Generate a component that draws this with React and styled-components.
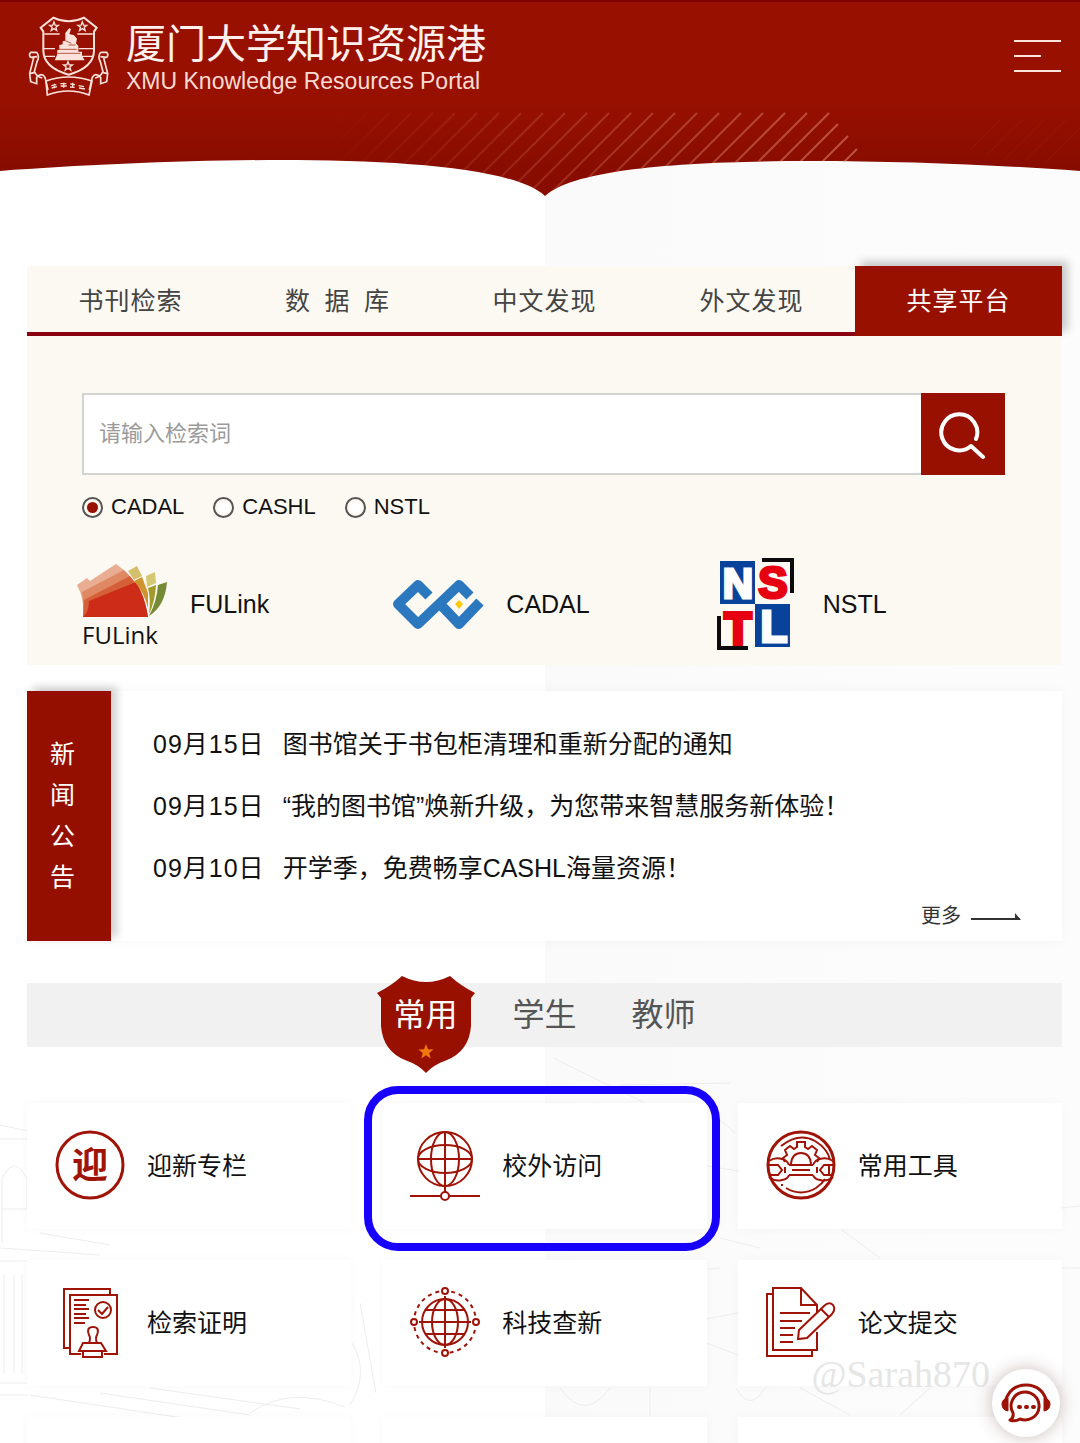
import React, { useState } from "react";
import styled, { createGlobalStyle } from "styled-components";

const tabs = ["书刊检索", "数\u2002据\u2002库", "中文发现", "外文发现", "共享平台"];
const sources = ["CADAL", "CASHL", "NSTL"];
const news = [
  { date: "09月15日", title: "图书馆关于书包柜清理和重新分配的通知" },
  { date: "09月15日", title: "“我的图书馆”焕新升级，为您带来智慧服务新体验！" },
  { date: "09月10日", title: "开学季，免费畅享CASHL海量资源！" },
];
const groups = ["常用", "学生", "教师"];

const starPoints = (cx, cy, r) => {
  const points = [];
  for (let i = 0; i < 10; i++) {
    const a = (Math.PI / 5) * i - Math.PI / 2;
    const len = i % 2 === 0 ? r : r * 0.42;
    points.push(`${cx + len * Math.cos(a)},${cy + len * Math.sin(a)}`);
  }
  return points.join(" ");
};

/* 页头 */
const curve =
  "M0 0H1080V171C1000 165 900 161 810 161C690 161 575 168 545 196C515 168 400 160 280 160C190 160 80 165 0 171Z";
const stripes = Array.from({ length: 25 }, (_, i) => 829 - i * 22);

const HeaderArt = () => (
  <ArtSvg viewBox="0 0 1080 196" preserveAspectRatio="none" aria-hidden="true">
    <defs>
      <linearGradient id="red" x1="0" y1="0" x2="0" y2="1">
        <stop offset="0.5" stopColor="#981000" />
        <stop offset="0.85" stopColor="#880d00" />
      </linearGradient>
      <linearGradient id="fade" gradientUnits="userSpaceOnUse" x1="330" y1="0" x2="850" y2="0">
        <stop offset="0" stopColor="#d0705c" stopOpacity="0" />
        <stop offset="1" stopColor="#d0705c" stopOpacity="0.7" />
      </linearGradient>
      <clipPath id="curveClip">
        <path d={curve} />
      </clipPath>
    </defs>
    <path d={curve} fill="url(#red)" />
    <rect width="1080" height="2" fill="#800000" />
    <g clipPath="url(#curveClip)" stroke="url(#fade)" strokeWidth="2">
      {stripes.map((x) => (
        <path key={x} d={`M${x} 113l-90 90`} />
      ))}
      <path d="M838 124l-70 70M848 136l-60 60M857 149l-50 50" />
    </g>
    <g stroke="#a8301f" strokeOpacity="0.25">
      <path d="M1000 120l-30 30M1022 120l-36 36M1044 120l-40 40M1066 120l-40 40M1080 128l-34 34" />
    </g>
  </ArtSvg>
);

const Emblem = () => (
  <svg width="82" height="80" viewBox="24 33 246 240" fill="none" stroke="#fbe3dc" strokeWidth="6" aria-hidden="true">
    <path d="M62 68L100 38Q146 60 192 38L230 68L222 80V136Q222 188 146 209Q70 188 70 136V80Z" />
    <path strokeWidth="4" d="M73 87h46M172 87h46M71 131h34M176 131h45M73 154h32M180 154h40" />
    <g strokeWidth="4">
      <polygon points={starPoints(102, 65, 14)} />
      <polygon points={starPoints(187, 65, 14)} />
      <polygon points={starPoints(144, 184, 14)} />
    </g>
    <path
      fill="#fbe3dc"
      stroke="none"
      d="M136 84l12-15 5 4-5 14 14 4 9 10-3 14 7 8v17h11v12l8 14h-90l7-16 1-14 6-3v-13l10-2v-9l8-2z"
    />
    <path stroke="#981000" strokeWidth="2" d="M112 133h58M111 145h70M145 120h22M136 107l18 8" />
    <path
      strokeWidth="5"
      d="M50 142H32q-7 7 0 15l9 2-12 47 3 24 18 6v-19q16-16 25 0l9 38M50 142q10 12 1 28l-8 30q9 17 24 19M32 157l19-2M29 206l17-4"
    />
    <path
      strokeWidth="5"
      d="M242 142h18q7 7 0 15l-9 2 12 47-3 24-18 6v-19q-16-16-25 0l-9 38M242 142q-10 12-1 28l8 30q-9 17-24 19M260 157l-19-2M263 206l-17-4"
    />
    <path strokeWidth="5" d="M78 228Q145 204 216 228L207 270Q146 246 82 270Z" />
    <path strokeWidth="4" d="M94 242l15-3M95 249l16-4M103 236v14M121 236h18M122 243h18M131 233v15M151 237l14 2M150 246l14 1M158 233v14M176 242l16 3M177 249l18 3" />
  </svg>
);

/* 共享平台 logo */
const FulinkLogo = () => (
  <LogoSvg width="100" height="92" viewBox="0 0 100 92" aria-hidden="true">
    <path fill="#e9ad92" d="M5 27L15 20L18 23L44 6Q70 24 76 59H11Q13 42 5 27Z" />
    <path fill="#de8963" d="M10 34L52 12Q71 30 76 59H11Q12 45 10 34Z" />
    <path fill="#d55f39" d="M12 42L58 18Q72 34 76 59H11Z" />
    <path fill="#cc2c18" d="M17 43L64 24Q73 38 76 59H11Q17 54 17 43Z" />
    <path fill="#d4c06c" d="M56 13L65 8L70 18L62 22Z" />
    <path fill="#cf9330" d="M62 23L70 19L76 35V50Q72 34 62 23Z" />
    <path fill="#d4c870" d="M74 18L83 14L84 25L75 29Z" />
    <path fill="#a39a2c" d="M76 30L84 27Q83 44 77 56Q79 41 76 30Z" />
    <path fill="#758a34" d="M86 27L95 24Q93 48 77 58Q85 43 86 27Z" />
    <text x="10" y="86" fontFamily='"Open Sans", sans-serif' fontSize="24" fill="#111">
      FULink
    </text>
  </LogoSvg>
);

const CadalLogo = () => (
  <LogoSvg width="100" height="92" viewBox="0 0 100 92" aria-hidden="true">
    <g fill="none" stroke="#2b78bf" strokeWidth="10" strokeLinejoin="round">
      <path d="M41 38L30 27L10 46L30 66L71 27L82 38" />
      <path d="M52 46L71 66L92 44" />
    </g>
    <path fill="#fdc90c" d="M71 42l4 4-4 5-4-5z" />
  </LogoSvg>
);

const NstlLogo = () => (
  <LogoSvg
    width="100"
    height="92"
    viewBox="0 0 100 92"
    fontFamily='"Liberation Sans", sans-serif'
    fontWeight="700"
    fontSize="44"
    strokeWidth="3"
    textAnchor="middle"
    aria-hidden="true"
  >
    <rect x="15" y="3" width="35" height="43" fill="#08429a" />
    <rect x="50" y="46" width="35" height="43" fill="#08429a" />
    <path d="M57 2H87V35M14 58V90H43" fill="none" stroke="#0b0b0b" strokeWidth="4" />
    <text x="33" y="40" fontSize="42" fill="#fff" stroke="#fff">N</text>
    <text x="68" y="40" fill="#e60012" stroke="#e60012">S</text>
    <text x="33" y="86" fill="#e60012" stroke="#e60012" strokeWidth="4">T</text>
    <text x="69" y="84" fill="#fff" stroke="#fff">L</text>
  </LogoSvg>
);

/* 服务图标 */
const Icon = ({ children }) => (
  <LogoSvg width="70" height="70" viewBox="0 0 70 70" fill="none" stroke="#a01408" strokeWidth="2" aria-hidden="true">
    {children}
  </LogoSvg>
);

const WelcomeIcon = () => (
  <Icon>
    <circle cx="35" cy="34" r="33" strokeWidth="3" />
    <text x="35" y="47" textAnchor="middle" fontSize="36" fontWeight="700" fill="#a01408" stroke="none">
      迎
    </text>
  </Icon>
);

const RemoteIcon = () => (
  <Icon>
    <circle cx="35" cy="28" r="27" />
    <ellipse cx="35" cy="28" rx="14" ry="27" />
    <ellipse cx="35" cy="28" rx="27" ry="14" />
    <path d="M8 28H62M35 1V61M0 65H31M39 65H70" />
    <circle cx="35" cy="65" r="4" />
  </Icon>
);

const ToolsIcon = () => (
  <Icon>
    <circle cx="35" cy="34" r="33" strokeWidth="3" />
    <path d="M15 15Q33 1 49 10Q62 18 64 29M20 57Q35 66 50 57Q56 53 59 48" />
    <path d="M19 31L17 27L21 24L19 19L24 15L28 18L31 16V11H39V16L42 18L46 15L51 19L49 24L53 27L51 31" />
    <path d="M25 33Q26 22 35 22Q44 22 45 33" />
    <path d="M23 34H47M23 44H47M26 39H44" />
    <path d="M3 30Q9 26 16 28Q21 29 23 34M3 46Q9 51 16 49Q22 48 23 44M3 34H12L16 39L12 44H3M19 36V42" />
    <path d="M67 30Q61 26 54 28Q49 29 47 34M67 46Q61 51 54 49Q48 48 47 44M67 34H58L54 39L58 44H67M51 36V42M63 34V44" />
    <path d="M15 54h2" />
  </Icon>
);

const CertIcon = () => (
  <Icon>
    <path d="M15 60H9V1H55V7" />
    <path d="M26 66H15V7H62V66H49" />
    <path d="M19 12H34M19 17H31M19 21H34M19 26H31M19 30H34M19 35H30" />
    <circle cx="48" cy="22" r="8" />
    <path d="M43 22L47 26L53 19" />
    <path d="M34 55Q36 50 34 47Q31 39 38 39Q45 39 42 47Q40 50 42 55M30 55H46L51 63H24L28 55ZM28 63H47V69H28Z" />
  </Icon>
);

const NoveltyIcon = () => (
  <Icon>
    <circle cx="35" cy="34" r="31" strokeDasharray="4 4" />
    <circle cx="35" cy="34" r="23" />
    <ellipse cx="35" cy="34" rx="13" ry="23" />
    <path d="M35 8V60M9 34H61M16 22H54M16 46H54" />
    <g fill="#fff">
      <circle cx="35" cy="3" r="3" />
      <circle cx="35" cy="65" r="3" />
      <circle cx="4" cy="34" r="3" />
      <circle cx="66" cy="34" r="3" />
    </g>
  </Icon>
);

const PaperIcon = () => (
  <Icon>
    <path d="M7 6H1V68H46V62" />
    <path d="M51 44V62H7V0H35L51 17V25M35 0V17H51" />
    <path d="M14 25H44M14 33H36M14 40H29M14 47H27M14 54H27" />
    <path d="M32 51L33 42L58 18Q63 13 67 17Q70 21 66 26L41 50ZM55 21L63 29" />
  </Icon>
);

const services = [
  { name: "迎新专栏", icon: WelcomeIcon },
  { name: "校外访问", icon: RemoteIcon, marked: true },
  { name: "常用工具", icon: ToolsIcon },
  { name: "检索证明", icon: CertIcon },
  { name: "科技查新", icon: NoveltyIcon },
  { name: "论文提交", icon: PaperIcon },
];

const CampusSketch = () => (
  <SketchSvg viewBox="0 0 1080 400" preserveAspectRatio="none" fill="none" stroke="#ededed" aria-hidden="true">
    <path d="M0 82L28 88M0 96H28M2 200V136Q14 110 27 136V166H2M0 218H28M4 232V330M14 232V330M22 232V330M0 340H28M0 352H28M0 205L100 212M40 190L110 202" />
    <path d="M30 352L190 376M100 350L250 372M150 345L300 366M250 370Q290 342 345 364M352 300Q370 330 350 362M360 260L376 350" />
    <path d="M553 15L645 60M620 42L730 40M700 60L735 90M690 120L738 128M660 230L720 225M720 195L760 205" />
    <path d="M842 187L880 215M706 276L738 270M706 300L738 312M560 345Q585 380 610 345M650 345V376M800 345L850 372M900 372L930 345M1062 165L1080 163M1062 225H1080M736 345Q750 370 765 345" />
  </SketchSvg>
);

const App = () => {
  const [tab, setTab] = useState(4);
  const [source, setSource] = useState("CADAL");
  const [group, setGroup] = useState(0);

  return (
    <Page>
      <GlobalStyle />
      <CampusSketch />
      <Header>
        <HeaderArt />
        <HeaderBar>
          <Brand href="#">
            <Emblem />
            <BrandText>
              <BrandName>厦门大学知识资源港</BrandName>
              <BrandSub>XMU Knowledge Resources Portal</BrandSub>
            </BrandText>
          </Brand>
          <MenuButton aria-label="菜单">
            <MenuLine />
            <MenuLine $short />
            <MenuLine />
          </MenuButton>
        </HeaderBar>
      </Header>

      <Main>
        <Tabs>
          {tabs.map((name, i) => (
            <Tab key={name} $active={i === tab} onClick={() => setTab(i)}>
              {name}
            </Tab>
          ))}
        </Tabs>
        <Panel>
          <SearchForm onSubmit={(e) => e.preventDefault()}>
            <SearchRow>
              <SearchInput type="text" placeholder="请输入检索词" aria-label="检索词" />
              <SearchButton type="submit" aria-label="检索">
                <svg width="48" height="48" viewBox="0 0 48 48" fill="none" stroke="#fff" strokeWidth="4" strokeLinecap="round">
                  <path d="M37 27A18 18 0 1 0 32 34L44 45" strokeLinejoin="round" />
                </svg>
              </SearchButton>
            </SearchRow>
            <Radios>
              {sources.map((name) => (
                <RadioLabel key={name}>
                  <Radio
                    type="radio"
                    name="source"
                    checked={source === name}
                    onChange={() => setSource(name)}
                  />
                  {name}
                </RadioLabel>
              ))}
            </Radios>
          </SearchForm>
          <Platforms>
            <Platform href="#">
              <FulinkLogo />
              FULink
            </Platform>
            <Platform href="#">
              <CadalLogo />
              CADAL
            </Platform>
            <Platform href="#">
              <NstlLogo />
              NSTL
            </Platform>
          </Platforms>
        </Panel>

        <News>
          <NewsLabel>
            <span>新闻公告</span>
          </NewsLabel>
          <NewsBody>
            {news.map((item) => (
              <NewsItem key={item.title} href="#">
                <NewsDate>{item.date}</NewsDate>
                {item.title}
              </NewsItem>
            ))}
            <More href="#">
              更多
              <svg width="50" height="10" viewBox="0 0 50 10" aria-hidden="true">
                <path d="M0 6H49V8H0ZM44 1L50 8H44Z" fill="#333" />
              </svg>
            </More>
          </NewsBody>
        </News>

        <Groups>
          {groups.map((name, i) => (
            <Group key={name} $active={i === group} onClick={() => setGroup(i)}>
              {i === group && (
                <Shield width="98" height="97" viewBox="0 0 98 97" aria-hidden="true">
                  <path
                    fill="#981000"
                    d="M25 0Q49 12 73 0Q84 10 98 17L94 22V50Q92 75 70 84Q56 89 49 97Q42 89 28 84Q6 75 4 50V22L0 17Q14 10 25 0Z"
                  />
                  <polygon points={starPoints(49, 76, 8)} fill="#f0780f" />
                </Shield>
              )}
              <span>{name}</span>
            </Group>
          ))}
        </Groups>

        <Cards>
          {services.map(({ name, icon: ServiceIcon, marked }) => (
            <Card key={name} href="#" $marked={marked}>
              <ServiceIcon />
              <CardName>{name}</CardName>
            </Card>
          ))}
          <EmptyCard />
          <EmptyCard />
          <EmptyCard />
        </Cards>
      </Main>

      <Watermark>@Sarah870</Watermark>
      <HelpButton aria-label="在线咨询">
        <svg width="50" height="40" viewBox="0 0 50 40" fill="none" stroke="#9c1206" strokeWidth="3" aria-hidden="true">
          <path d="M4 19Q9 2 25 2Q41 2 46 19" />
          <path d="M7 15V28Q1 27 1 21Q1 16 7 15ZM43 15V28Q49 27 49 21Q49 16 43 15Z" fill="#9c1206" strokeWidth="1" />
          <path d="M12 30A14 14 0 1 1 19 36Q14 39 9 37Q13 35 12 30Z" strokeLinejoin="round" />
          <path d="M18 24h1M25 24h1M32 24h1" strokeLinecap="round" strokeWidth="4" />
        </svg>
      </HelpButton>
    </Page>
  );
};

const GlobalStyle = createGlobalStyle`
  * {
    box-sizing: border-box;
  }
  body {
    margin: 0;
    font-family: "Liberation Sans", "Noto Sans CJK SC", sans-serif;
    color: #111;
  }
  button, input {
    font-family: inherit;
  }
  a {
    color: inherit;
    text-decoration: none;
  }
  svg {
    flex-shrink: 0;
  }
`;

const Page = styled.div`
  position: relative;
  height: 100vh;
  overflow: hidden;
  background: linear-gradient(90deg, #fff calc(50% + 5px), #fafafa calc(50% + 5px), #fcfcfc 90%);
`;
const SketchSvg = styled.svg`
  position: absolute;
  left: 0;
  bottom: 0;
  width: 100%;
  height: 400px;
`;
const LogoSvg = styled.svg`
  overflow: visible;
`;
const Header = styled.header`
  display: grid;
`;
const ArtSvg = styled.svg`
  grid-area: 1 / 1;
  width: 100%;
  height: 196px;
`;
const HeaderBar = styled.div`
  grid-area: 1 / 1;
  z-index: 1;
  display: flex;
  justify-content: space-between;
  align-items: flex-start;
  padding: 16px 19px 0 28px;
`;
const Brand = styled.a`
  display: flex;
  gap: 16px;
  color: #fff2ee;
`;
const BrandText = styled.div`
  display: flex;
  flex-direction: column;
`;
const BrandName = styled.h1`
  margin: 0;
  font-size: 40px;
  font-weight: 400;
  line-height: 56px;
`;
const BrandSub = styled.span`
  font-size: 23px;
  line-height: 18px;
  color: #fbdcd4;
`;
const MenuButton = styled.button`
  display: flex;
  flex-direction: column;
  gap: 13px;
  width: 47px;
  margin-top: 24px;
  padding: 0;
  border: 0;
  background: none;
  cursor: pointer;
`;
const MenuLine = styled.span`
  width: ${(props) => (props.$short ? "27px" : "100%")};
  height: 2px;
  background: #fbe3dc;
`;

const Main = styled.main`
  position: relative;
  padding: 70px 18px 0 27px;
`;
const Tabs = styled.nav`
  display: grid;
  grid-template-columns: repeat(5, 1fr);
  background: #fcf9f3;
`;
const Tab = styled.button`
  height: 70px;
  padding: 0;
  border: 0;
  border-bottom: 4px solid ${(props) => (props.$active ? "#981000" : "#8a0310")};
  background: ${(props) => (props.$active ? "#981000" : "#fcf9f3")};
  color: ${(props) => (props.$active ? "#fff" : "#444")};
  box-shadow: ${(props) => (props.$active ? "6px -5px 8px rgba(0, 0, 0, 0.2)" : "none")};
  font-size: 25px;
  letter-spacing: 1px;
  cursor: pointer;
`;
const Panel = styled.section`
  position: relative;
  padding: 57px 0 15px;
  background: #fcf9f2;
`;
const SearchForm = styled.form`
  padding: 0 57px 0 55px;
`;
const SearchRow = styled.div`
  display: flex;
  height: 82px;
`;
const SearchInput = styled.input`
  flex: 1;
  min-width: 0;
  padding: 0 15px;
  border: 2px solid #d3d3d1;
  border-right: 0;
  border-radius: 0;
  outline: none;
  background: #fff;
  font-size: 22px;
  &::placeholder {
    color: #9a9a9a;
  }
`;
const SearchButton = styled.button`
  display: flex;
  align-items: center;
  justify-content: center;
  width: 84px;
  padding: 4px 0 0;
  border: 0;
  background: #981000;
  cursor: pointer;
`;
const Radios = styled.div`
  display: flex;
  gap: 29px;
  margin-top: 18px;
`;
const RadioLabel = styled.label`
  display: flex;
  align-items: center;
  gap: 8px;
  font-size: 22px;
  line-height: 28px;
`;
const Radio = styled.input`
  appearance: none;
  width: 21px;
  height: 21px;
  margin: 0;
  padding: 3px;
  border: 2px solid #555;
  border-radius: 50%;
  background-clip: content-box;
  background-color: #fff;
  &:checked {
    background-color: #981000;
  }
`;
const Platforms = styled.div`
  display: grid;
  grid-template-columns: repeat(3, 1fr);
  margin-top: 37px;
  padding: 0 41px 0 45px;
`;
const Platform = styled.a`
  display: flex;
  align-items: center;
  gap: 18px;
  font-size: 25px;
`;

const News = styled.section`
  display: flex;
  margin-top: 26px;
  background: #fff;
  box-shadow: 0 0 12px rgba(0, 0, 0, 0.04);
`;
const NewsLabel = styled.h2`
  display: flex;
  align-items: center;
  width: 84px;
  margin: 0;
  padding-left: 23px;
  background: #950f00;
  box-shadow: 6px -4px 8px rgba(0, 0, 0, 0.18);
  color: #fff;
  font-size: 25px;
  font-weight: 400;
  line-height: 41px;
  & > span {
    width: 25px;
  }
`;
const NewsBody = styled.div`
  flex: 1;
  display: flex;
  flex-direction: column;
  padding: 22px 41px 7px 42px;
`;
const NewsItem = styled.a`
  display: flex;
  gap: 18px;
  font-size: 25px;
  line-height: 62px;
`;
const NewsDate = styled.time`
  letter-spacing: 1px;
`;
const More = styled.a`
  display: flex;
  align-items: center;
  align-self: flex-end;
  gap: 10px;
  font-size: 20px;
  line-height: 35px;
  color: #333;
`;

const Groups = styled.div`
  display: flex;
  justify-content: center;
  margin-top: 42px;
  background: #f1f1f1;
`;
const Group = styled.button`
  position: relative;
  width: 119px;
  height: 64px;
  padding: 0 0 6px;
  border: 0;
  background: none;
  color: ${(props) => (props.$active ? "#fff" : "#555")};
  font-size: 32px;
  cursor: pointer;
  & > span {
    position: relative;
  }
`;
const Shield = styled.svg`
  position: absolute;
  top: -7px;
  left: 11px;
`;

const Cards = styled.div`
  display: grid;
  grid-template-columns: repeat(3, 1fr);
  gap: 31px;
  margin-top: 56px;
`;
const Card = styled.a`
  position: relative;
  display: flex;
  align-items: center;
  gap: 22px;
  height: 126px;
  padding: 0 28px;
  background: #fff;
  box-shadow: 0 0 10px rgba(0, 0, 0, 0.03);
  /* 重点入口外面的蓝框 */
  &::after {
    content: "";
    display: ${(props) => (props.$marked ? "block" : "none")};
    position: absolute;
    inset: -17px -13px -22px -18px;
    border: 8px solid #1800ff;
    border-radius: 34px;
  }
`;
const CardName = styled.span`
  padding-bottom: 4px;
  font-size: 25px;
`;
const EmptyCard = styled.div`
  height: 126px;
  background: #fff;
  box-shadow: 0 0 10px rgba(0, 0, 0, 0.03);
`;

const Watermark = styled.div`
  position: absolute;
  right: 90px;
  bottom: 48px;
  font-family: "Liberation Serif", serif;
  font-size: 38px;
  line-height: 42px;
  color: #e6e6e6;
`;
const HelpButton = styled.button`
  position: fixed;
  right: 20px;
  bottom: 6px;
  display: flex;
  align-items: center;
  justify-content: center;
  width: 68px;
  height: 68px;
  padding: 0;
  border: 0;
  border-radius: 50%;
  background: #fff;
  box-shadow: 0 0 18px rgba(80, 30, 30, 0.3);
  cursor: pointer;
`;

export default App;
